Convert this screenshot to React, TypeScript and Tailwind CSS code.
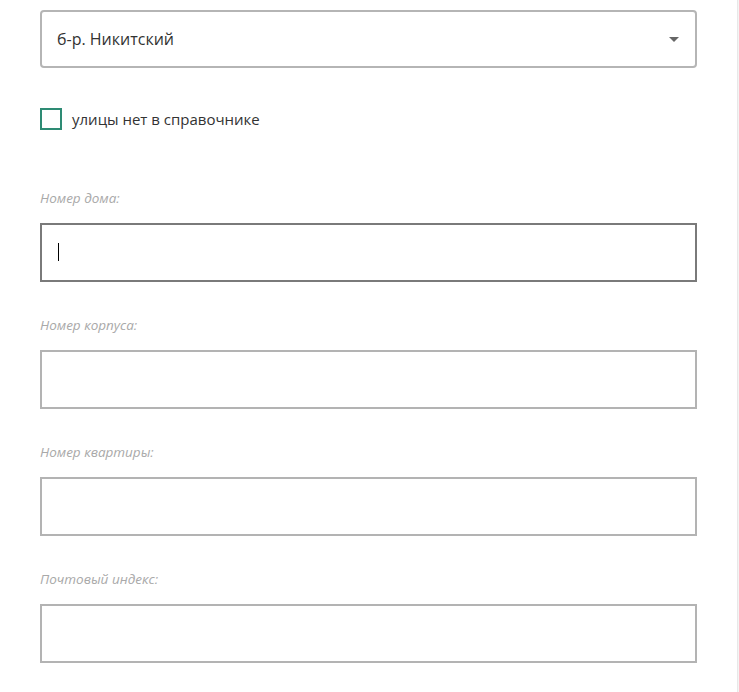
import React from "react";

const labelCls =
  "block text-[13.5px] leading-[20px] italic text-[#a9a9a9] pt-[2px] mb-[15px]";
const inputCls = "h-[59px] border-2 border-[#b3b3b3] bg-white";

function Field({
  label,
  focused,
  first,
}: {
  label: string;
  focused?: boolean;
  first?: boolean;
}) {
  return (
    <div className={first ? "" : "mt-[31px]"}>
      <span className={labelCls}>{label}</span>
      {focused ? (
        <div className="h-[59px] border-2 border-[#7a7a7a] bg-white flex items-center pl-[16px]">
          <span className="block w-[1px] h-[18px] bg-black" />
        </div>
      ) : (
        <div className={inputCls} />
      )}
    </div>
  );
}

export default function App() {
  return (
    <div
      className="relative w-full h-[692px] bg-white flex overflow-hidden"
      style={{ fontFamily: '"Open Sans", "Liberation Sans", sans-serif' }}
    >
      <div className="w-[737px] pl-[40px] pt-[10px]">
        <div className="w-[657px]">
          <div className="h-[58px] border-2 border-[#b5b5b5] rounded-[4px] flex items-center justify-between pl-[15px] pr-[16px]">
            <span className="text-[16px] text-[#333333]">б-р. Никитский</span>
            <svg width="10" height="5" viewBox="0 0 10 5">
              <path d="M0 0 L10 0 L5 5 Z" fill="#666666" />
            </svg>
          </div>
          <label className="flex items-center mt-[40px]">
            <span className="block w-[22px] h-[22px] border-2 border-[#2e8b74] bg-white" />
            <span className="ml-[10px] text-[15px] text-[#333333]">
              улицы нет в справочнике
            </span>
          </label>
          <div className="mt-[55px]">
            <Field label="Номер дома:" focused first />
            <Field label="Номер корпуса:" />
            <Field label="Номер квартиры:" />
            <Field label="Почтовый индекс:" />
          </div>
        </div>
      </div>
      <div className="w-[2px] h-full bg-[#f4f4f4] border-l border-[#e8e8e8]" />
    </div>
  );
}
